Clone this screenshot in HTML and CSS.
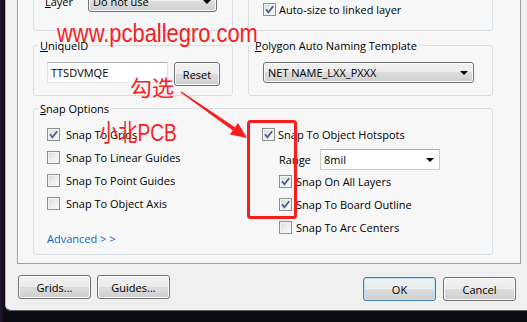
FILE: index.html
```html
<!DOCTYPE html>
<html lang="zh-CN">
<head>
  <meta charset="UTF-8" />
  <meta name="viewport" content="width=device-width, initial-scale=1.0"/>
  <title>Board Options</title>
  <link rel="stylesheet" href="styles.css">
</head>
<body>
  <div class="screen">
    <div class="dialog">
      <div class="page">
        <div class="row">
          <div class="group top-left">
            <label class="field-label"><u>L</u>ayer</label>
            <div class="combo combo-btn layer-combo"><span>Do not use</span><span class="caret"></span></div>
          </div>
          <div class="group top-right">
            <div class="check-row tight">
              <span class="cb"><svg viewBox="0 0 11 11" width="11" height="11"><path d="M2 5.3l2.4 3L9.2 2.2"/></svg></span>
              Auto-size to linked layer
            </div>
          </div>
        </div>

        <div class="row row-mid">
          <div class="group mid-left">
            <span class="legend"><u>U</u>niqueID</span>
            <div class="text-input">TTSDVMQE</div>
            <button class="btn reset-btn">Reset</button>
          </div>
          <div class="group mid-right">
            <span class="legend"><u>P</u>olygon Auto Naming Template</span>
            <div class="combo combo-btn naming-combo"><span>NET NAME_LXX_PXXX</span><span class="caret"></span></div>
          </div>
        </div>

        <div class="group snap">
          <span class="legend"><u>S</u>nap Options</span>
          <div class="snap-col left-col">
            <div class="check-row">
              <span class="cb"><svg viewBox="0 0 11 11" width="11" height="11"><path d="M2 5.3l2.4 3L9.2 2.2"/></svg></span>
              Snap To Grids
            </div>
            <div class="check-row"><span class="cb"></span>Snap To Linear Guides</div>
            <div class="check-row"><span class="cb"></span>Snap To Point Guides</div>
            <div class="check-row"><span class="cb"></span>Snap To Object Axis</div>
            <a class="advanced" href="#">Advanced &gt; &gt;</a>
          </div>
          <div class="snap-col right-col">
            <div class="check-row tight">
              <span class="cb"><svg viewBox="0 0 11 11" width="11" height="11"><path d="M2 5.3l2.4 3L9.2 2.2"/></svg></span>
              Snap To Object Hotspots
            </div>
            <div class="range-row">
              <label class="range-label">Range</label>
              <div class="combo combo-edit range-combo"><span>8mil</span><span class="caret"></span></div>
            </div>
            <div class="check-row sub">
              <span class="cb"><svg viewBox="0 0 11 11" width="11" height="11"><path d="M2 5.3l2.4 3L9.2 2.2"/></svg></span>
              Snap On All Layers
            </div>
            <div class="check-row sub">
              <span class="cb"><svg viewBox="0 0 11 11" width="11" height="11"><path d="M2 5.3l2.4 3L9.2 2.2"/></svg></span>
              Snap To Board Outline
            </div>
            <div class="check-row sub"><span class="cb"></span>Snap To Arc Centers</div>
          </div>
        </div>
      </div>

      <div class="footer">
        <button class="btn">Grids...</button>
        <button class="btn guides-btn">Guides...</button>
        <button class="btn ok-btn">OK</button>
        <button class="btn cancel-btn">Cancel</button>
      </div>
    </div>

    <!-- red annotations drawn over the dialog -->
    <div class="notes">
      <svg class="marks" width="527" height="322" viewBox="0 0 527 322">
        <polygon points="181.4,91.4 235,127.2 232.8,130.4 180.6,92.6" fill="#f81e1e"/>
        <polygon points="247,138 237.9,123.1 229.9,134.5" fill="#f81e1e"/>
        <rect x="248.5" y="121.5" width="47" height="96" rx="2" fill="none" stroke="#f81e1e" stroke-width="3"/>
      </svg>
      <span class="note note-url">www.pcballegro.com</span>
      <span class="note note-pick">勾选</span>
      <span class="note note-brand">小北PCB</span>
    </div>
  </div>
</body>
</html>
```

FILE: styles.css
```css
* {
  box-sizing: border-box;
}
body {
  margin: 0;
  width: 527px;
  height: 322px;
  overflow: hidden;
  font-family: "Open Sans", "Segoe UI", sans-serif;
  font-size: 11px;
  color: #000;
  background: #07080c;
}
.screen {
  position: relative;
  width: 527px;
  height: 322px;
  overflow: hidden;
  background: linear-gradient(90deg, #241530 0, #0c0b12 5px);
}
.dialog {
  margin-left: 5px;
  width: 522px;
  height: 311px;
  background: #f0f0f0;
  border-left: 1px solid #b4bec8;
  border-bottom: 1px solid #59626c;
  border-bottom-left-radius: 6px;
  padding: 0 6px 0 11px;
  overflow: hidden;
}

/* tab page */
.page {
  margin-top: -22px;
  height: 286px;
  border: 1px solid #a0a4aa;
  background: #f7f7f7;
  padding: 0 0 8px 15px;
}
.row {
  display: flex;
  gap: 15px;
}
.row-mid {
  margin-top: 14px;
}
.group {
  position: relative;
  border: 1px solid #d5dfe5;
  border-radius: 3px;
}
.legend {
  position: absolute;
  top: -8px;
  left: 4px;
  padding: 0 2px;
  line-height: 15px;
  background: #f7f7f7;
  white-space: nowrap;
}

.top-left {
  width: 200px;
  height: 52px;
  display: flex;
  align-items: flex-start;
  padding: 11px 0 0 11px;
}
.top-right {
  width: 245px;
  height: 52px;
  padding: 22px 0 0 14px;
}
.field-label {
  width: 43px;
  line-height: 21px;
}
.layer-combo {
  width: 129px;
}

.mid-left {
  width: 200px;
  height: 51px;
  display: flex;
  align-items: flex-start;
  padding: 16px 0 0 13px;
}
.mid-right {
  width: 245px;
  height: 51px;
  padding: 16px 0 0 14px;
}
.naming-combo {
  width: 211px;
}
.text-input {
  width: 121px;
  height: 21px;
  line-height: 19px;
  padding-left: 3px;
  background: #fff;
  border: 1px solid;
  border-color: #abadb3 #dbdfe6 #e3e9ef #e2e3ea;
}
.reset-btn {
  width: 46px;
  margin-left: 6px;
  height: 21px;
}

/* combos */
.combo {
  height: 21px;
  display: flex;
  align-items: center;
  justify-content: space-between;
  padding: 0 5px 0 4px;
  white-space: nowrap;
}
.combo-btn {
  border: 1px solid #707070;
  border-radius: 3px;
  background: linear-gradient(#f2f2f2 0%, #ebebeb 50%, #dddddd 50%, #cfcfcf 100%);
  box-shadow: inset 0 0 0 1px #fbfbfb;
}
.combo-edit {
  background: #fff;
  border: 1px solid #c9ccd1;
  border-top-color: #abadb3;
  padding-left: 3px;
}
.caret {
  width: 0;
  height: 0;
  border-left: 4px solid transparent;
  border-right: 4px solid transparent;
  border-top: 4px solid #000;
}

/* snap options */
.snap {
  width: 460px;
  height: 147px;
  margin-top: 12px;
  display: flex;
  padding: 14px 0 0 13px;
}
.left-col {
  width: 215px;
}
.check-row {
  display: flex;
  align-items: center;
  height: 23px;
  gap: 6px;
  white-space: nowrap;
}
.check-row.tight {
  gap: 3px;
  height: 15px;
}
.right-col .check-row.tight {
  height: 23px;
}
.check-row.sub {
  margin-left: 17px;
  gap: 4px;
}
.cb {
  width: 13px;
  height: 13px;
  flex: none;
  border: 1px solid #8e8f8f;
  background: linear-gradient(135deg, #d9dadc 0%, #eeeeee 55%, #fbfbfb 100%);
  box-shadow: inset 0 0 0 1px #f4f4f4;
}
.cb svg {
  display: block;
}
.cb path {
  fill: none;
  stroke: #4a5c8d;
  stroke-width: 1.8;
}
.advanced {
  display: block;
  margin-top: 12px;
  line-height: 23px;
  color: #0a66cc;
  text-decoration: none;
}
.range-row {
  display: flex;
  align-items: flex-end;
  height: 24px;
  margin-left: 17px;
}
.range-label {
  width: 41px;
  line-height: 21px;
}
.range-combo {
  width: 120px;
}

/* buttons */
.btn {
  font: inherit;
  color: #000;
  height: 24px;
  padding: 0;
  border: 1px solid #707070;
  border-radius: 3px;
  background: linear-gradient(#f2f2f2 0%, #ebebeb 50%, #dddddd 50%, #cfcfcf 100%);
  box-shadow: inset 0 0 0 1px #fcfcfc;
}
.footer {
  display: flex;
  align-items: flex-start;
  padding: 11px 5px 0 1px;
}
.footer .btn {
  width: 73px;
}
.guides-btn {
  margin-left: 6px;
}
.ok-btn {
  margin-left: auto;
  margin-top: 2px;
  border-color: #3c7fb1;
  box-shadow: inset 0 0 0 1px #bfe4f8;
}
.cancel-btn {
  margin-left: 7px;
  margin-top: 2px;
}

/* annotations */
.notes {
  position: absolute;
  top: 0;
  left: 0;
  width: 527px;
  height: 322px;
  pointer-events: none;
}
.marks {
  position: absolute;
  top: 0;
  left: 0;
}
.note {
  position: absolute;
  color: #f81e1e;
  white-space: nowrap;
  transform-origin: 0 0;
}
.note-url {
  left: 57px;
  top: 21px;
  font: 25px/25px "Liberation Sans", sans-serif;
  transform: scaleX(0.876);
}
.note-pick {
  left: 130px;
  top: 75px;
  font: 22px/22px "Noto Sans CJK SC", sans-serif;
}
.note-brand {
  left: 99px;
  top: 121px;
  font: 24px/24px "Liberation Sans", "Noto Sans CJK SC", sans-serif;
  transform: scaleX(0.8);
}
```
